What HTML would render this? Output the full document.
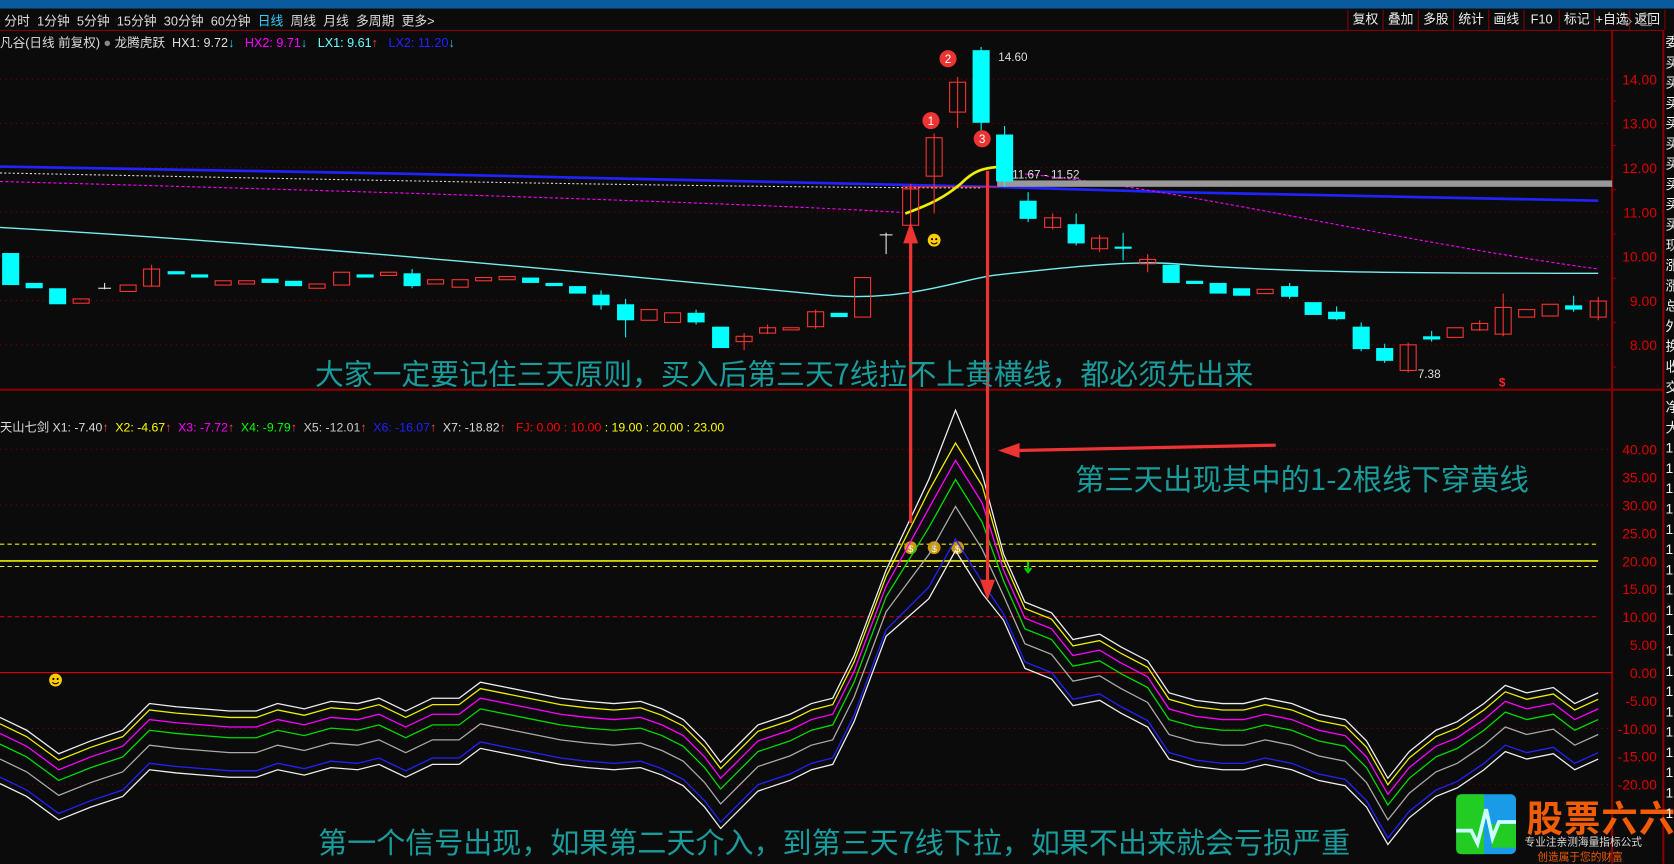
<!DOCTYPE html>
<html><head><meta charset="utf-8"><style>
html,body{margin:0;padding:0;background:#0b0b0b;overflow:hidden;width:1674px;height:864px}
#w{position:absolute;left:0;top:0;width:1568px;height:809px;transform:scale(1.0676);transform-origin:0 0;font-family:"Liberation Sans","Noto Sans CJK SC",sans-serif;color:#ddd}
.a{position:absolute;white-space:nowrap}
.tb{font-size:12px;top:11px}
.btn{position:absolute;top:9px;height:19px;border-left:1px solid #800;font-size:12px;line-height:19px;text-align:center;width:32px;color:#eee}
.big{position:absolute;white-space:nowrap;color:#1b9c9c;font-family:"Noto Sans CJK SC",sans-serif}
</style></head><body><div id="w">
<div class="a" style="left:0;top:0;width:1568px;height:8px;background:#0a5a9e"></div>
<div class="a" style="left:0;top:28px;width:1558px;height:1px;background:#8a0000"></div>
<div class="a tb" style="left:4px">分时&nbsp; 1分钟&nbsp; 5分钟&nbsp; 15分钟&nbsp; 30分钟&nbsp; 60分钟&nbsp; <span style="color:#3cf">日线</span>&nbsp; 周线&nbsp; 月线&nbsp; 多周期&nbsp; 更多&gt;</div>
<div class="btn" style="left:1262px">复权</div><div class="btn" style="left:1295px">叠加</div><div class="btn" style="left:1328px">多股</div><div class="btn" style="left:1361px">统计</div><div class="btn" style="left:1394px">画线</div><div class="btn" style="left:1427px">F10</div><div class="btn" style="left:1460px">标记</div><div class="btn" style="left:1493px">+自选</div><div class="btn" style="left:1526px;border-right:1px solid #800">返回</div>
<div class="a" style="left:0;top:31px;font-size:11.8px">凡谷(日线 前复权) <span style="color:#888">●</span> 龙腾虎跃&nbsp; HX1: 9.72<span style="color:#3cf">↓</span>&nbsp;&nbsp; <span style="color:#f0f">HX2: 9.71</span><span style="color:#3cf">↓</span>&nbsp;&nbsp; <span style="color:#6ff">LX1: 9.61</span><span style="color:#f44">↑</span>&nbsp;&nbsp; <span style="color:#22f">LX2: 11.20</span><span style="color:#3cf">↓</span></div>
<div class="a" style="left:0;top:392px;font-size:11.5px">天山七剑 X1: -7.40<span style="color:#f44">↑</span>&nbsp; <span style="color:#ff0">X2: -4.67</span><span style="color:#f44">↑</span>&nbsp; <span style="color:#f0f">X3: -7.72</span><span style="color:#f44">↑</span>&nbsp; <span style="color:#0f0">X4: -9.79</span><span style="color:#f44">↑</span>&nbsp; <span style="color:#ccc">X5: -12.01</span><span style="color:#f44">↑</span>&nbsp; <span style="color:#22f">X6: -16.07</span><span style="color:#f44">↑</span>&nbsp; X7: -18.82<span style="color:#f44">↑</span>&nbsp;&nbsp; <span style="color:#f00">FJ: 0.00 : 10.00</span> <span style="color:#ff0">: 19.00 : 20.00 : 23.00</span></div>
<svg id="s" class="a" style="left:0;top:0" width="1568" height="809"></svg>
<div class="big" style="left:295px;top:329px;font-size:27px">大家一定要记住三天原则，买入后第三天7线拉不上黄横线，都必须先出来</div>
<div class="big" style="left:1007px;top:427px;font-size:27.5px">第三天出现其中的1-2根线下穿黄线</div>
<div class="big" style="left:298px;top:767px;font-size:27.2px">第一个信号出现，如果第二天介入，到第三天7线下拉，如果不出来就会亏损严重</div>
<div class="a" style="left:1430px;top:740px;font-size:34px;font-weight:bold;color:#f25c05;font-family:'Noto Sans CJK SC',sans-serif;letter-spacing:1px">股票六六</div>
<div class="a" style="left:1428px;top:780px;font-size:10px;color:#ddd;font-family:'Noto Sans CJK SC',sans-serif">专业注亲测海量指标公式</div>
<div class="a" style="left:1440px;top:794px;font-size:10px;color:#f25c05;font-family:'Noto Sans CJK SC',sans-serif">创造属于您的财富</div>
<div class="a" style="left:1560px;top:30px;font-size:13px;line-height:19px;width:10px;overflow:hidden;color:#eee">委<br>买<br>买<br>买<br>买<br>买<br>买<br>买<br>买<br>买<br>现<br>涨<br>涨<br>总<br>外<br>换<br>收<br>交<br>净<br>大<br>1<br>1<br>1<br>1<br>1<br>1<br>1<br>1<br>1<br>1<br>1<br>1<br>1<br>1<br>1<br>1<br>1<br>1<br>1</div>
</div>
<script>
const S=document.getElementById('s');let h='';
const R='#8a0000';
h+=`<line x1="1510" y1="28" x2="1510" y2="809" stroke="${R}" stroke-width="2"/><line x1="1558" y1="28" x2="1558" y2="809" stroke="${R}" stroke-width="2"/><line x1="0" y1="365" x2="1558" y2="365" stroke="${R}" stroke-width="2"/>`;
const py=p=>74+(14-p)*41.5;
for(let p=8;p<=14;p++){const y=py(p);h+=`<line x1="0" y1="${y}" x2="1510" y2="${y}" stroke="${R}" stroke-dasharray="1,4"/><text x="1552" y="${y+5}" fill="#d00" font-size="13" text-anchor="end" font-family="Liberation Sans">${p}.00</text><line x1="1510" y1="${y+20.7}" x2="1514" y2="${y+20.7}" stroke="${R}"/>`}
const sy=v=>630-v*5.23;
for(let v=-20;v<=40;v+=5){const y=sy(v);if(v%10==0&&v!=20&&v!=0&&v!=10)h+=`<line x1="0" y1="${y}" x2="1510" y2="${y}" stroke="${R}" stroke-dasharray="1,4"/>`;h+=`<text x="1552" y="${y+5}" fill="#d00" font-size="13" text-anchor="end" font-family="Liberation Sans">${v.toFixed(2)}</text>`}
h+=`<line x1="0" y1="${sy(23)}" x2="1497" y2="${sy(23)}" stroke="#ee0" stroke-dasharray="4,3"/><line x1="0" y1="${sy(19)}" x2="1497" y2="${sy(19)}" stroke="#ee0" stroke-dasharray="4,3"/><line x1="0" y1="${sy(20)}" x2="1497" y2="${sy(20)}" stroke="#ee0" stroke-width="1.5"/><line x1="0" y1="${sy(10)}" x2="1497" y2="${sy(10)}" stroke="#e00" stroke-dasharray="4,3"/><line x1="0" y1="${sy(0)}" x2="1510" y2="${sy(0)}" stroke="#d00"/>`;
h+=`<path d="M0,156 C300,160 700,170 930,175 L1100,180 L1497,188" stroke="#22f" stroke-width="2.5" fill="none"/>`;
h+=`<path d="M0,162 C300,168 700,176 920,176" stroke="#ddd" stroke-dasharray="2,2" fill="none"/>`;
h+=`<path d="M0,170 C300,178 700,190 845,199 M960,163 C1100,175 1300,225 1497,252" stroke="#f0f" stroke-dasharray="3,2" fill="none"/>`;
h+=`<path d="M0,213 C300,230 600,260 780,277 C850,282 900,262 930,258 C1000,250 1060,244 1100,247 C1200,255 1300,256 1497,256" stroke="#7ee" stroke-width="1.3" fill="none"/>`;
h+=`<rect x="934" y="169" width="576" height="6" fill="#999"/>`;
h+=`<line x1="845" y1="175" x2="935" y2="175" stroke="#e22"/>`;
h+=`<path d="M848,200 C870,192 885,185 900,172 C910,162 918,156 945,156" stroke="#ee0" stroke-width="2.5" fill="none"/>`;
h+=`<text x="948" y="167" fill="#ddd" font-size="11">11.67 - 11.52</text>`;
const C=[[10,237,267,'c'],[32,265,270,'c'],[54,270,285,'c'],[76,280,284,'r'],[98,270,271,'w',265],[120,267,273,'r'],[142,252,268,'r',248],[165,254,257,'c'],[187,257,260,'c'],[209,263,267,'r'],[231,263,266,'r'],[253,261,265,'c'],[275,263,268,'c'],[297,266,270,'r'],[320,255,267,'r'],[342,257,260,'c'],[364,255,258,'r'],[386,256,268,'c',252,270],[408,262,266,'r'],[431,262,269,'r'],[453,260,263,'r'],[475,259,262,'r'],[497,260,265,'c'],[519,265,268,'c'],[541,268,275,'c'],[563,276,286,'c',272,290],[586,285,300,'c',280,316],[608,290,300,'r'],[630,293,302,'r'],[652,293,302,'c',290,304],[675,306,326,'c'],[697,315,320,'r',312,328],[719,307,312,'r',304,313],[741,307,309,'r'],[764,292,306,'r',290,308],[786,293,297,'c'],[808,260,297,'r'],[830,220,221,'w',218,238],[853,177,211,'r',172,213],[875,129,165,'r',125,200],[897,77,105,'r',72,120],[919,47,115,'c',44,122],[941,126,170,'c',118,175],[963,188,205,'c',180,208],[986,204,213,'r',200,215],[1008,210,228,'c',200,230],[1030,223,233,'r',220,236],[1052,231,233,'c',218,244],[1075,243,247,'r',238,255],[1097,248,265,'c'],[1119,263,266,'c'],[1141,265,275,'c'],[1163,270,277,'c'],[1185,271,275,'r'],[1208,268,278,'c',265,280],[1230,283,295,'c'],[1252,292,299,'c',287,300],[1275,306,327,'c',302,329],[1297,326,338,'c',322,340],[1319,323,347,'r',321,349],[1341,315,318,'c',310,320],[1363,307,316,'r'],[1386,303,309,'r',300,310],[1408,288,313,'r',275,315],[1430,290,297,'r'],[1452,285,296,'r'],[1474,286,290,'c',277,292],[1497,282,297,'r',278,300]];
for(const c of C){const[x,a,b,t,hi,lo]=c;const col=t=='c'?'#0ff':t=='r'?'#f33':'#eee';if(hi||lo)h+=`<line x1="${x}" y1="${hi||a}" x2="${x}" y2="${lo||b}" stroke="${col}"/>`;
if(t=='c')h+=`<rect x="${x-8}" y="${a}" width="16" height="${Math.max(b-a,2)}" fill="#0ff"/>`;else if(t=='r')h+=`<rect x="${x-7.5}" y="${a}" width="15" height="${Math.max(b-a,2)}" fill="none" stroke="#f33"/>`;else h+=`<line x1="${x-6}" y1="${a}" x2="${x+6}" y2="${a}" stroke="#eee"/>`}
h+=`<text x="935" y="57" fill="#ddd" font-size="11">14.60</text><text x="1328" y="354" fill="#ddd" font-size="11">7.38</text><text x="1404" y="362" fill="#f22" font-size="11" font-weight="bold">$</text>`;
for(const[x,y,n]of[[872,113,1],[888,55,2],[920,130,3]])h+=`<circle cx="${x}" cy="${y}" r="8" fill="#e33"/><text x="${x}" y="${y+4}" fill="#fff" font-size="11" text-anchor="middle">${n}</text>`;
for(const[x,y]of[[875,225],[52,637]])h+=`<circle cx="${x}" cy="${y}" r="6" fill="#fc0"/><circle cx="${x-2}" cy="${y-1}" r="1" fill="#000"/><circle cx="${x+2}" cy="${y-1}" r="1" fill="#000"/><path d="M${x-3},${y+2} Q${x},${y+5} ${x+3},${y+2}" stroke="#000" fill="none"/>`;
for(const x of[853,875,897])h+=`<circle cx="${x}" cy="${513}" r="6" fill="#c90"/><text x="${x}" y="517" fill="#fff" font-size="9" text-anchor="middle">$</text>`;
h+=`<path d="M963,526 L963,535 M960,532 L963,536 L966,532" stroke="#0c0" stroke-width="2" fill="none"/>`;
const P=[[0,678],[25,690],[55,712],[85,700],[115,690],[140,665],[165,668],[190,670],[215,672],[240,672],[260,665],[285,670],[310,663],[335,665],[355,660],[380,672],[405,660],[430,660],[450,645],[475,650],[500,655],[525,660],[550,663],[575,665],[600,663],[620,670],[640,680],[660,700],[675,720],[690,705],[710,685],[740,675],[760,665],[780,660],[800,620],[830,540],[870,460],[895,415],[920,455],[940,525],[960,570],[985,580],[1005,605],[1030,600],[1050,612],[1075,625],[1095,655],[1120,662],[1145,665],[1165,665],[1185,660],[1210,665],[1235,675],[1260,680],[1280,700],[1300,735],[1320,710],[1345,690],[1365,682],[1390,665],[1410,648],[1430,655],[1455,650],[1475,665],[1497,655]];
const L=[['#eee',-6],['#ee0',0],['#f0f',9],['#0d0',19],['#aaa',33],['#22f',50],['#eee',56]];
for(const[col,o]of L){h+=`<polyline fill="none" stroke="${col}" stroke-width="1.2" points="${P.map(([x,y])=>{const k=(x>860&&x<930)?1.8:1;return x+','+(y+o*k-(x==895&&o<0?20:0))}).join(' ')}"/>`}
h+=`<path d="M853,490 L853,222" stroke="#e33" stroke-width="3"/><path d="M846,228 L853,208 L860,228Z" fill="#e33"/>`;
h+=`<path d="M925,160 L925,548" stroke="#e33" stroke-width="3"/><path d="M918,543 L925,562 L932,543Z" fill="#e33"/>`;
h+=`<path d="M1195,417 L950,422" stroke="#e33" stroke-width="3"/><path d="M955,415 L935,422 L955,429Z" fill="#e33"/>`;
h+=`<rect x="1364" y="744" width="56" height="56" rx="5" fill="#1a9be8"/><path d="M1369,744 L1390,744 L1390,800 L1369,800 Q1364,800 1364,795 L1364,749 Q1364,744 1369,744Z" fill="#2c2"/><rect x="1397" y="772" width="23" height="22" fill="#2c2"/><path d="M1364,778 L1378,778 L1384,790 L1392,758 L1398,785 L1404,770 L1420,770" stroke="#cff" stroke-width="3.5" fill="none"/>`;
h+=`<path d="M1520,20 l4,-4 l4,4 l-4,4z" stroke="#888" fill="none"/><rect x="1537" y="14" width="10" height="10" stroke="#888" fill="none" rx="1"/>`;
S.innerHTML=h;
</script>
</body></html>
